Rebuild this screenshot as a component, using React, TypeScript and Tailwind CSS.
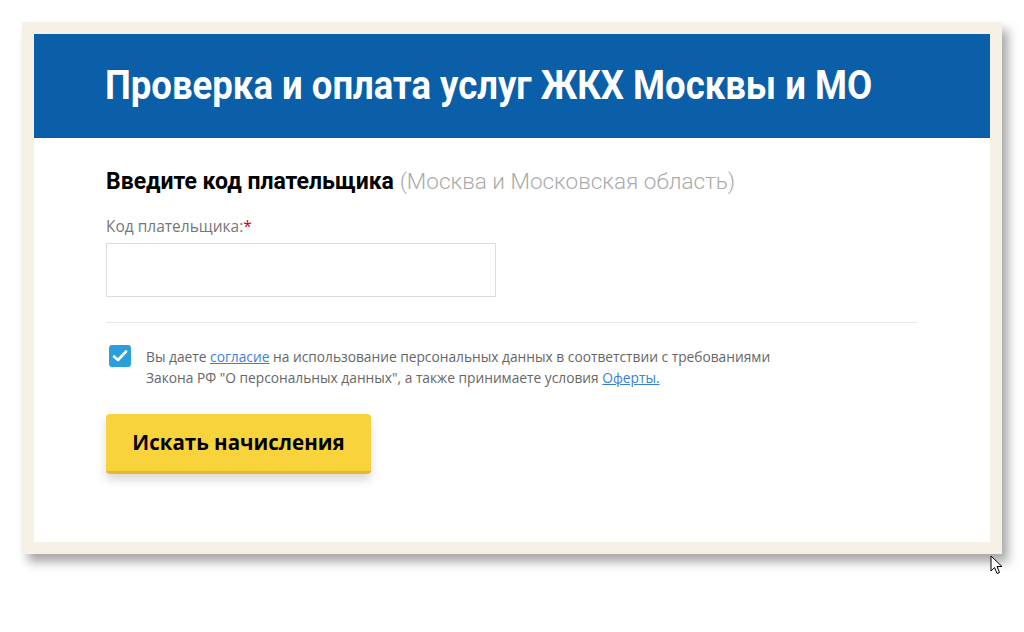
import React, { useState } from 'react';

const App: React.FC = () => {
  const [agree, setAgree] = useState(true);
  const [code, setCode] = useState('');

  return (
    <div className="relative w-[1024px] h-[632px] bg-white overflow-hidden">
      <div className="pl-[22px] pt-[22px]">
        {/* Frame */}
        <div className="w-[980px] bg-[#f5f1e6] p-[12px] shadow-[6px_8px_10px_rgba(0,0,0,0.35)]">
          {/* Header */}
          <div className="bg-[#0a5fa8] h-[104px] flex items-center pl-[71px]">
            <h1
              className="inline-block origin-left scale-x-[0.913] text-white text-[40px] font-bold leading-none whitespace-nowrap"
              style={{ fontFamily: 'Roboto, sans-serif' }}
            >
              Проверка и оплата услуг ЖКХ Москвы и МО
            </h1>
          </div>

          {/* Body */}
          <div className="bg-white h-[404px] pl-[72px] pr-[72px] pt-[28px]">
            <h2 className="leading-[30px] whitespace-nowrap text-[23px]" style={{ fontFamily: 'Roboto, sans-serif' }}>
              <span className="font-bold text-black">Введите код плательщика</span>{' '}
              <span className="font-light text-[22.5px] text-[#aaaaaa]">(Москва и Московская область)</span>
            </h2>

            <label className="block mt-[18px] text-[15.5px] text-[#777] leading-[22px]" style={{ fontFamily: '"Open Sans", sans-serif' }}>
              Код плательщика:<span className="text-[#d0021b]">*</span>
            </label>
            <input
              value={code}
              onChange={(e) => setCode(e.target.value)}
              className="mt-[6px] block w-[390px] h-[54px] border border-[#dddddd] outline-none px-3 text-[16px]"
            />

            <div className="mt-[25px] w-[811px] border-t border-[#e8e8e8]" />

            <div className="flex mt-[23px]" style={{ fontFamily: '"Open Sans", sans-serif' }}>
              <button
                onClick={() => setAgree(!agree)}
                className={`mt-[-1px] ml-[3px] w-[22px] h-[22px] rounded-[3px] flex items-center justify-center shrink-0 ${
                  agree ? 'bg-[#2a9fdc]' : 'bg-white border border-[#ccc]'
                }`}
              >
                {agree && (
                  <svg width="16" height="14" viewBox="0 0 16 14">
                    <path d="M2 7.5 L6 11 L14 2.5" stroke="white" strokeWidth="2.6" fill="none" strokeLinecap="round" strokeLinejoin="round" />
                  </svg>
                )}
              </button>
              <p className="ml-[15px] text-[13.75px] leading-[21px] text-[#666]">
                Вы даете <a href="#" className="text-[#3b7fd6] underline">согласие</a> на использование персональных данных в соответствии с требованиями
                <br />
                Закона РФ "О персональных данных", а также принимаете условия{' '}
                <a href="#" className="text-[#3b7fd6] underline">Оферты.</a>
              </p>
            </div>

            <button
              className="mt-[26px] w-[265px] h-[60px] rounded-[4px] bg-[#f8d33c] border-b-[3px] border-[#e5b92c] text-black text-[20.5px] font-bold shadow-[0_6px_10px_rgba(0,0,0,0.15)]"
              style={{ fontFamily: '"Open Sans", sans-serif' }}
            >
              Искать начисления
            </button>
          </div>
        </div>
      </div>

      {/* mouse cursor */}
      <svg className="absolute left-[990px] top-[555px]" width="13" height="20" viewBox="0 0 13 20">
        <path d="M1 1 L1 16 L4.5 12.5 L7 18.5 L9.5 17.5 L7 11.5 L12 11.5 Z" fill="white" stroke="black" strokeWidth="1" />
      </svg>
    </div>
  );
};

export default App;
